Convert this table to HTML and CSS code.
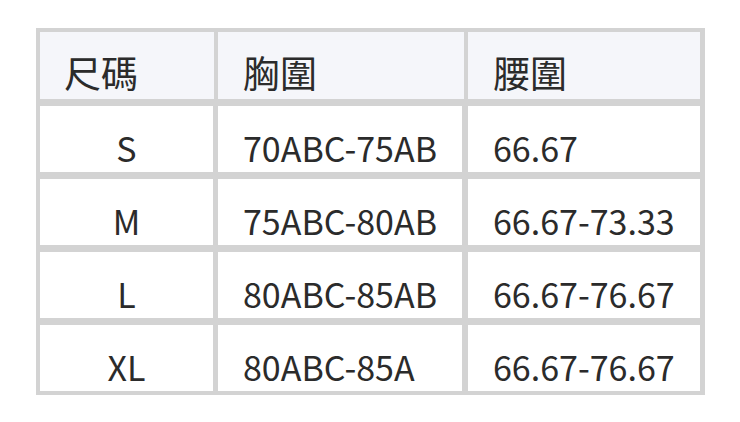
FILE: index.html
```html
<!DOCTYPE html>
<html lang="zh-Hant">
<head>
<meta charset="utf-8">
<link rel="stylesheet" href="styles.css">
</head>
<body>
<div class="size-table">
  <div class="cell head first">尺碼</div>
  <div class="cell head">胸圍</div>
  <div class="cell head last">腰圍</div>

  <div class="cell body first">S</div>
  <div class="cell body">70ABC-75AB</div>
  <div class="cell body last">66.67</div>

  <div class="cell body first">M</div>
  <div class="cell body">75ABC-80AB</div>
  <div class="cell body last">66.67-73.33</div>

  <div class="cell body first">L</div>
  <div class="cell body">80ABC-85AB</div>
  <div class="cell body last">66.67-76.67</div>

  <div class="cell body first">XL</div>
  <div class="cell body">80ABC-85A</div>
  <div class="cell body last">66.67-76.67</div>
</div>
</body>
</html>
```

FILE: styles.css
```css
html, body {
  margin: 0;
  padding: 0;
  background: #ffffff;
}

body {
  padding: 28px 0 0 36px;
  font-family: "Noto Sans CJK TC", "Noto Sans", sans-serif;
  font-weight: 400;
  color: #2b2b2b;
}

.size-table {
  width: 661px;
  display: grid;
  grid-template-columns: 174px 246px 232px;
  grid-template-rows: 67px repeat(4, 66px);
  column-gap: 4px;
  row-gap: 7px;
  padding: 4px;
  background: #d3d3d3;
}

.cell {
  display: flex;
  align-items: flex-end;
  font-size: 34px;
  line-height: normal;
  padding-left: 25px;
  box-sizing: border-box;
}

.head {
  background: #f5f6fa;
  font-size: 37px;
  padding-bottom: 0;
}

.head.first {
  padding-left: 24px;
}

.body {
  background: #ffffff;
  margin-right: 2px;
}

.body.first {
  justify-content: center;
  padding-left: 0;
  margin-right: 1px;
}

.body.last {
  margin-right: 0;
}
```
